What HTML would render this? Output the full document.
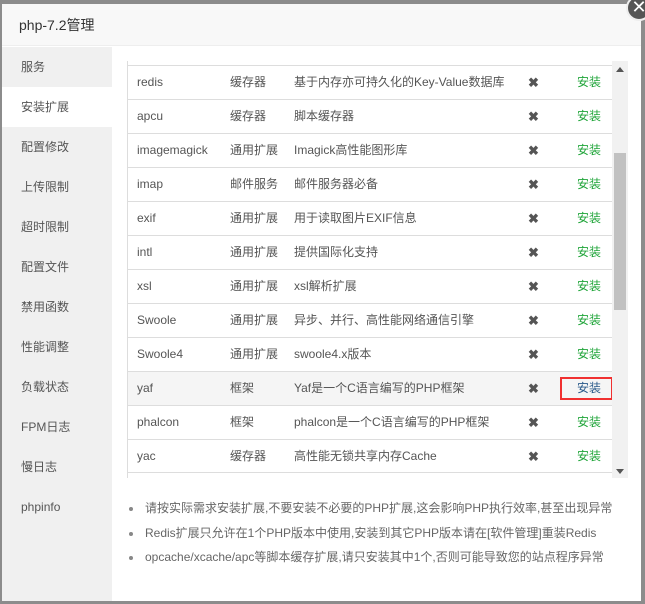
<!DOCTYPE html>
<html><head><meta charset="utf-8"><style>
*{margin:0;padding:0;box-sizing:border-box}
body{width:645px;height:604px;background:#8c8c8c;font-family:"Liberation Sans","Noto Sans CJK SC",sans-serif;font-size:12px;color:#555;position:relative;overflow:hidden}
.dlg{position:absolute;left:2px;top:4px;width:639px;height:597px;background:#fff}
.title{height:42px;background:#f8f8f8;border-bottom:1px solid #eee;font-size:14px;color:#333;line-height:42px;padding-left:17px}
.side{position:absolute;left:0;top:43px;width:110px;height:554px;background:#f0f0f0}
.side div{height:40px;line-height:40px;padding-left:19px;color:#555;font-size:12px}
.side .act{background:#fff}
.tbl{position:absolute;left:127px;top:61px;width:487px;height:417px;overflow:hidden;border-left:1px solid #ddd}
.row{position:absolute;left:0;width:486px;height:34px;border-top:1px solid #ddd;line-height:33px}
.row span{position:absolute;top:0}
.row .n{left:9px}.row .t{left:102px}.row .d{left:166px}
.row .x{left:400px;font-size:13px;color:#555;font-weight:bold}
.row .i{left:449px;color:#20a53a}
.sb{position:absolute;left:612px;top:61px;width:16px;height:417px;background:#f1f1f1}
.thumb{position:absolute;left:2px;top:92px;width:12px;height:157px;background:#c1c1c1}
.notes{position:absolute;left:128px;top:497px}
.notes div{height:24.5px;line-height:22px;padding-left:17px;position:relative;color:#666}
.notes div:before{content:"";position:absolute;left:1px;top:10px;width:4px;height:4px;border-radius:50%;background:#888}
.close{position:absolute;left:626px;top:-5px;width:26px;height:26px;border-radius:50%;background:#555;border:2px solid #eee;color:#fff;font-size:18px;text-align:center;line-height:21px}
</style></head><body>
<div class="dlg">
<div class="title">php-7.2管理</div>
<div class="side">
<div>服务</div><div class="act">安装扩展</div><div>配置修改</div><div>上传限制</div><div>超时限制</div><div>配置文件</div><div>禁用函数</div><div>性能调整</div><div>负载状态</div><div>FPM日志</div><div>慢日志</div><div>phpinfo</div>
</div>
</div>
<div class="tbl">
<div class="row" style="top:4px"><span class="n">redis</span><span class="t">缓存器</span><span class="d">基于内存亦可持久化的Key-Value数据库</span><span class="x">✖</span><span class="i">安装</span></div>
<div class="row" style="top:38px"><span class="n">apcu</span><span class="t">缓存器</span><span class="d">脚本缓存器</span><span class="x">✖</span><span class="i">安装</span></div>
<div class="row" style="top:72px"><span class="n">imagemagick</span><span class="t">通用扩展</span><span class="d">Imagick高性能图形库</span><span class="x">✖</span><span class="i">安装</span></div>
<div class="row" style="top:106px"><span class="n">imap</span><span class="t">邮件服务</span><span class="d">邮件服务器必备</span><span class="x">✖</span><span class="i">安装</span></div>
<div class="row" style="top:140px"><span class="n">exif</span><span class="t">通用扩展</span><span class="d">用于读取图片EXIF信息</span><span class="x">✖</span><span class="i">安装</span></div>
<div class="row" style="top:174px"><span class="n">intl</span><span class="t">通用扩展</span><span class="d">提供国际化支持</span><span class="x">✖</span><span class="i">安装</span></div>
<div class="row" style="top:208px"><span class="n">xsl</span><span class="t">通用扩展</span><span class="d">xsl解析扩展</span><span class="x">✖</span><span class="i">安装</span></div>
<div class="row" style="top:242px"><span class="n">Swoole</span><span class="t">通用扩展</span><span class="d">异步、并行、高性能网络通信引擎</span><span class="x">✖</span><span class="i">安装</span></div>
<div class="row" style="top:276px"><span class="n">Swoole4</span><span class="t">通用扩展</span><span class="d">swoole4.x版本</span><span class="x">✖</span><span class="i">安装</span></div>
<div class="row" style="top:310px;background:#f5f5f5"><span class="n">yaf</span><span class="t">框架</span><span class="d">Yaf是一个C语言编写的PHP框架</span><span class="x">✖</span><span class="i" style="color:#2a5a8a">安装</span><div style="position:absolute;left:432px;top:5px;width:53px;height:23px;border:2px solid #f03030"></div></div>
<div class="row" style="top:344px"><span class="n">phalcon</span><span class="t">框架</span><span class="d">phalcon是一个C语言编写的PHP框架</span><span class="x">✖</span><span class="i">安装</span></div>
<div class="row" style="top:378px;border-bottom:1px solid #ddd"><span class="n">yac</span><span class="t">缓存器</span><span class="d">高性能无锁共享内存Cache</span><span class="x">✖</span><span class="i">安装</span></div>
</div>
<div class="sb"><div style="position:absolute;left:4px;top:6px;border:4px solid transparent;border-bottom:5px solid #555;border-top:0"></div><div class="thumb"></div><div style="position:absolute;left:4px;top:408px;border:4px solid transparent;border-top:5px solid #555;border-bottom:0"></div></div>
<div class="notes">
<div>请按实际需求安装扩展,不要安装不必要的PHP扩展,这会影响PHP执行效率,甚至出现异常</div>
<div>Redis扩展只允许在1个PHP版本中使用,安装到其它PHP版本请在[软件管理]重装Redis</div>
<div>opcache/xcache/apc等脚本缓存扩展,请只安装其中1个,否则可能导致您的站点程序异常</div>
</div>
<div class="close">✕</div>
</body></html>
